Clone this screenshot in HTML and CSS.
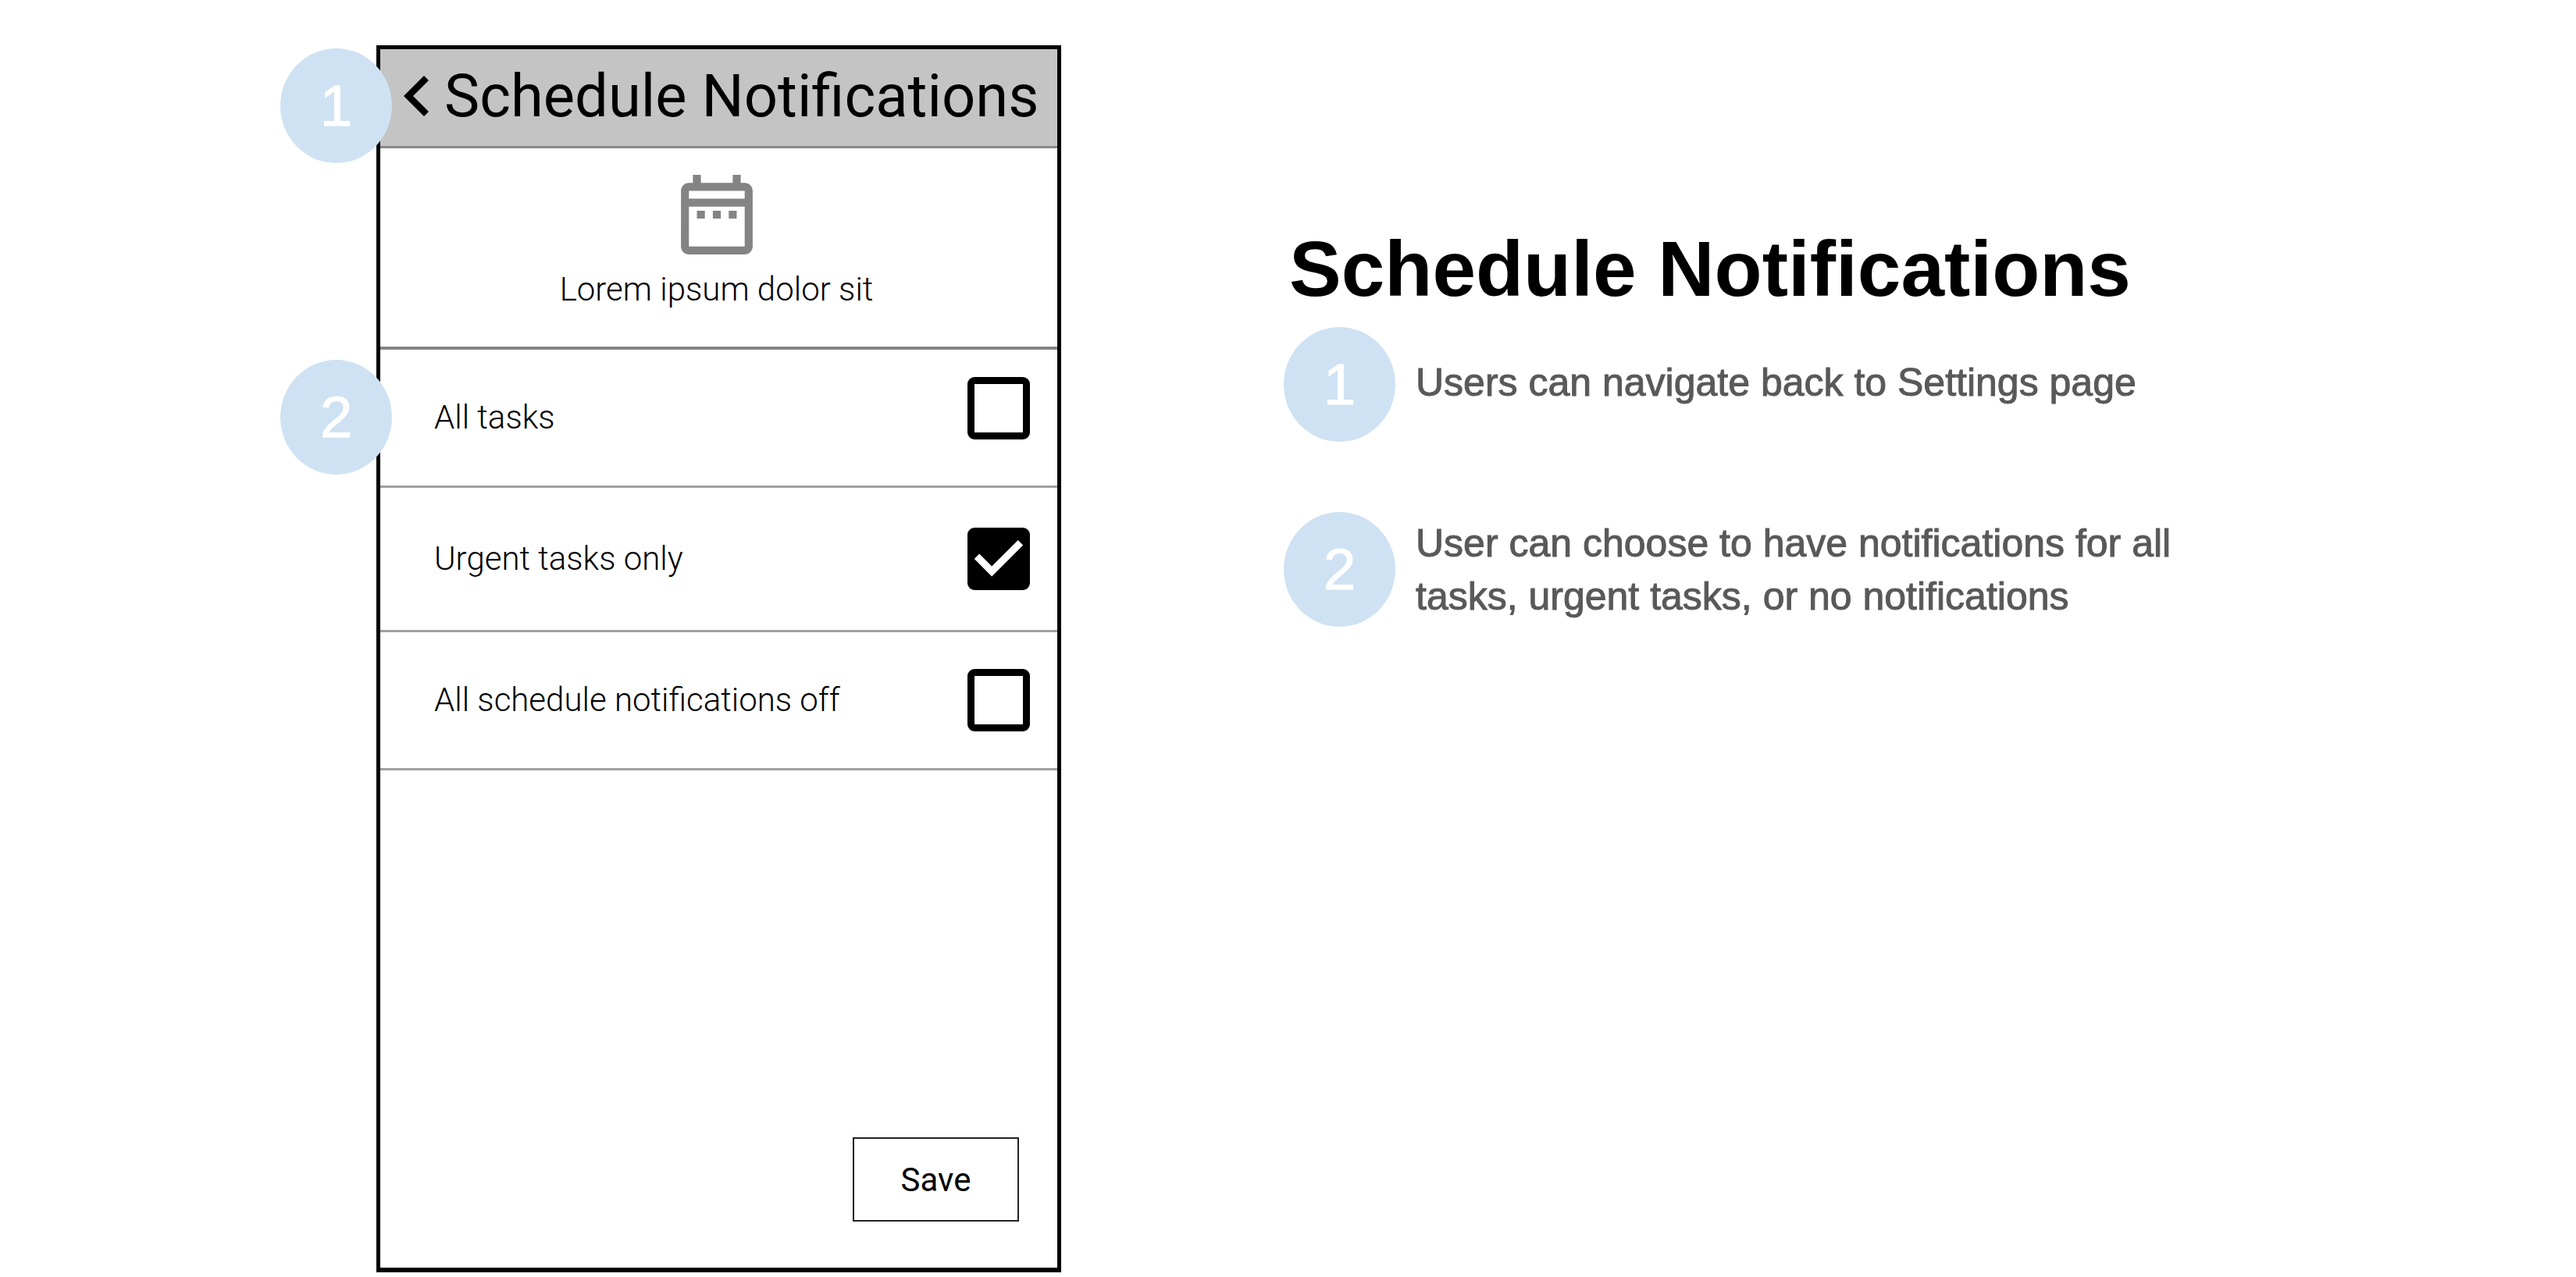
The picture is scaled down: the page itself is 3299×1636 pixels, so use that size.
FILE: index.html
```html
<!DOCTYPE html>
<html lang="en">
<head>
<meta charset="utf-8">
<title>Schedule Notifications</title>
<link rel="stylesheet" href="styles.css">
</head>
<body>
<main class="board">
  <section class="phone" aria-label="Schedule notifications screen">
    <header class="phone-header">
      <a class="back" href="#settings" aria-label="Back to Settings">
        <svg class="back-icon" viewBox="0 0 32 52" aria-hidden="true"><path d="M26 0L32 6L12 26L32 46L26 52L0 26Z"/></svg>
      </a>
      <h2 class="phone-title">Schedule Notifications</h2>
      <span class="badge badge-pinned badge-header">1</span>
    </header>
    <div class="intro">
      <svg class="calendar" viewBox="3 2 18 20" aria-hidden="true"><path d="M7 11h2v2H7v-2zm14-5v14c0 1.1-.9 2-2 2H5c-1.11 0-2-.9-2-2l.01-14c0-1.1.88-2 1.99-2h1V2h2v2h8V2h2v2h1c1.1 0 2 .9 2 2zM5 8h14V6H5v2zm14 12V10H5v10h14zm-4-7h2v-2h-2v2zm-4 0h2v-2h-2v2z"/></svg>
      <p class="intro-text">Lorem ipsum dolor sit</p>
    </div>
    <form class="form">
      <ul class="options">
        <li class="option option-raised">
          <label class="option-label" for="all-tasks">All tasks</label>
          <input class="check" type="checkbox" id="all-tasks">
          <span class="badge badge-pinned badge-option">2</span>
        </li>
        <li class="option option-tall">
          <label class="option-label" for="urgent-tasks">Urgent tasks only</label>
          <input class="check" type="checkbox" id="urgent-tasks" checked>
        </li>
        <li class="option">
          <label class="option-label" for="all-off">All schedule notifications off</label>
          <input class="check" type="checkbox" id="all-off">
        </li>
      </ul>
      <button class="save" type="button">Save</button>
    </form>
  </section>
  <section class="notes">
    <h1 class="notes-title">Schedule Notifications</h1>
    <ol class="notes-list">
      <li class="note">
        <span class="badge">1</span>
        <p class="note-text note-text-short">Users can navigate back to Settings page</p>
      </li>
      <li class="note">
        <span class="badge">2</span>
        <p class="note-text">User can choose to have notifications for all tasks, urgent tasks, or no notifications</p>
      </li>
    </ol>
  </section>
</main>
</body>
</html>
```
FILE: styles.css
```css
* {
  box-sizing: border-box;
}

body {
  margin: 0;
  background: #fff;
  color: #000;
  font-family: "Liberation Sans", Arial, sans-serif;
}

h1, h2, p, ul, ol {
  margin: 0;
  padding: 0;
}

ul, ol {
  list-style: none;
}

.board {
  display: grid;
  grid-template-columns: 482fr minmax(0, 877fr) 285fr minmax(0, 1655fr);
  min-height: 100vh;
  padding: 58px 0 6px;
}

/* Phone mock-up */
.phone {
  grid-column: 2;
  display: flex;
  flex-direction: column;
  border: 5px solid #000;
  border-bottom-width: 6px;
  font-family: Roboto, sans-serif;
}

.phone-header {
  position: relative;
  display: flex;
  align-items: center;
  gap: 20px;
  height: 127px;
  padding: 0 16px 4px 30px;
  border-bottom: 3px solid #888;
  background: #c4c4c4;
}

.back {
  display: flex;
}

.back-icon {
  width: 32px;
  height: 52px;
}

.phone-title {
  font-size: 76px;
  font-weight: 400;
  line-height: 90px;
  white-space: nowrap;
}

.intro {
  display: flex;
  flex-direction: column;
  align-items: center;
  gap: 20px;
  height: 258px;
  padding: 34px 6px 0 0;
  border-bottom: 4px solid #848484;
}

.calendar {
  width: 92px;
  height: 102px;
  fill: #848484;
}

.intro-text {
  font-size: 42px;
  font-weight: 300;
  line-height: 50px;
}

.form {
  flex: 1;
  display: flex;
  flex-direction: column;
}

.option {
  position: relative;
  display: flex;
  align-items: center;
  justify-content: space-between;
  height: 177px;
  padding: 0 35px 0 69px;
  border-bottom: 3px solid #a0a0a0;
}

.option-tall {
  height: 185px;
}

.option-label {
  font-size: 42px;
  font-weight: 300;
  line-height: 50px;
}

.check {
  appearance: none;
  width: 80px;
  height: 80px;
  margin: 0;
  border: 9px solid #000;
  border-radius: 9px;
  background: #fff;
}

.check:checked {
  border: 0;
  background: #000;
}

.check:checked::before {
  content: "";
  display: block;
  height: 100%;
  background: #fff;
  clip-path: polygon(39% 78%, 11% 50%, 19% 42%, 39% 62%, 81% 20%, 89% 28%);
}

.option-raised .check {
  margin-bottom: 24px;
}

.save {
  align-self: flex-end;
  width: 213px;
  height: 108px;
  margin: auto 49px 59px 0;
  padding: 0;
  border: 2px solid #222;
  background: #fff;
  color: #000;
  font-family: Roboto, sans-serif;
  font-size: 42px;
}

/* Numbered markers */
.badge {
  flex: none;
  width: 143px;
  height: 147px;
  border-radius: 50%;
  background: #cfe2f3;
  color: #fff;
  font-family: "Liberation Sans", Arial, sans-serif;
  font-size: 75px;
  line-height: 147px;
  text-align: center;
  -webkit-text-stroke: 1px #fff;
}

.badge-pinned {
  position: absolute;
  left: -128px;
}

.badge-header {
  top: -1px;
}

.badge-option {
  top: 13px;
}

/* Annotations */
.notes {
  grid-column: 4;
  padding: 230px 24px 0 0;
}

.notes-title {
  padding-left: 7px;
  font-size: 100px;
  line-height: 112px;
}

.notes-list {
  display: flex;
  flex-direction: column;
  gap: 90px;
  margin-top: 19px;
}

.note {
  display: flex;
  align-items: center;
  gap: 26px;
}

.note-text {
  max-width: 1000px;
  color: #595959;
  font-size: 50px;
  line-height: 68px;
  -webkit-text-stroke: 1px #595959;
}

.note-text-short {
  padding-bottom: 6px;
}
```
